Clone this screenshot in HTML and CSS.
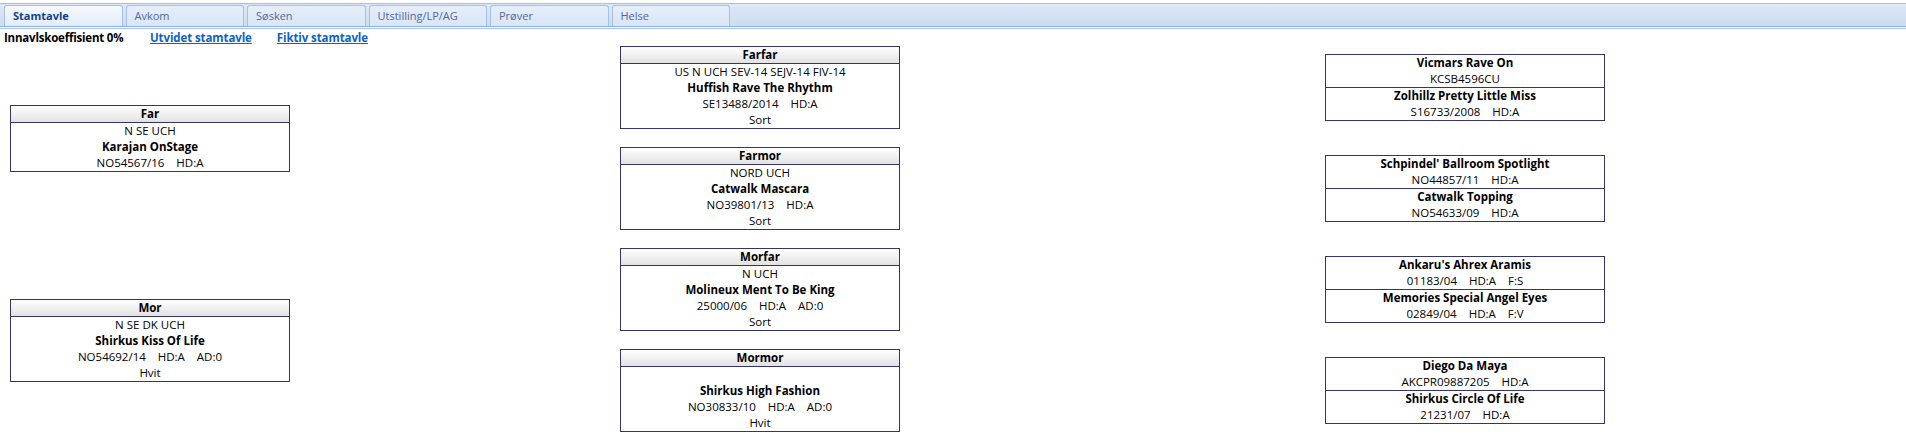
FILE: index.html
```html
<!DOCTYPE html>
<html lang="no">
<head>
<meta charset="utf-8">
<title>Stamtavle</title>
<link rel="stylesheet" href="styles.css">
</head>
<body>
<div class="tabstrip">
  <div class="tabbar">
    <div class="tab active">Stamtavle</div>
    <div class="tab">Avkom</div>
    <div class="tab">Søsken</div>
    <div class="tab">Utstilling/LP/AG</div>
    <div class="tab">Prøver</div>
    <div class="tab">Helse</div>
  </div>
</div>
<div class="infobar">
  <span class="coef">Innavlskoeffisient 0%</span>
  <a class="link" href="#">Utvidet stamtavle</a>
  <a class="link" href="#">Fiktiv stamtavle</a>
</div>
<div class="tree">
  <div class="box far">
    <div class="head">Far</div>
    <div class="line">N SE UCH</div>
    <div class="line name">Karajan OnStage</div>
    <div class="line">NO54567/16    HD:A</div>
  </div>
  <div class="box mor">
    <div class="head">Mor</div>
    <div class="line">N SE DK UCH</div>
    <div class="line name">Shirkus Kiss Of Life</div>
    <div class="line">NO54692/14    HD:A    AD:0</div>
    <div class="line">Hvit</div>
  </div>

  <div class="box mid r1">
    <div class="head">Farfar</div>
    <div class="line">US N UCH SEV-14 SEJV-14 FIV-14</div>
    <div class="line name">Huffish Rave The Rhythm</div>
    <div class="line">SE13488/2014    HD:A</div>
    <div class="line">Sort</div>
  </div>
  <div class="box mid r2">
    <div class="head">Farmor</div>
    <div class="line">NORD UCH</div>
    <div class="line name">Catwalk Mascara</div>
    <div class="line">NO39801/13    HD:A</div>
    <div class="line">Sort</div>
  </div>
  <div class="box mid r3">
    <div class="head">Morfar</div>
    <div class="line">N UCH</div>
    <div class="line name">Molineux Ment To Be King</div>
    <div class="line">25000/06    HD:A    AD:0</div>
    <div class="line">Sort</div>
  </div>
  <div class="box mid r4">
    <div class="head">Mormor</div>
    <div class="line"></div>
    <div class="line name">Shirkus High Fashion</div>
    <div class="line">NO30833/10    HD:A    AD:0</div>
    <div class="line">Hvit</div>
  </div>

  <div class="box pair r1">
    <div class="sec">
      <div class="line name">Vicmars Rave On</div>
      <div class="line">KCSB4596CU</div>
    </div>
    <div class="sec">
      <div class="line name">Zolhillz Pretty Little Miss</div>
      <div class="line">S16733/2008    HD:A</div>
    </div>
  </div>
  <div class="box pair r2">
    <div class="sec">
      <div class="line name">Schpindel' Ballroom Spotlight</div>
      <div class="line">NO44857/11    HD:A</div>
    </div>
    <div class="sec">
      <div class="line name">Catwalk Topping</div>
      <div class="line">NO54633/09    HD:A</div>
    </div>
  </div>
  <div class="box pair r3">
    <div class="sec">
      <div class="line name">Ankaru's Ahrex Aramis</div>
      <div class="line">01183/04    HD:A    F:S</div>
    </div>
    <div class="sec">
      <div class="line name">Memories Special Angel Eyes</div>
      <div class="line">02849/04    HD:A    F:V</div>
    </div>
  </div>
  <div class="box pair r4">
    <div class="sec">
      <div class="line name">Diego Da Maya</div>
      <div class="line">AKCPR09887205    HD:A</div>
    </div>
    <div class="sec">
      <div class="line name">Shirkus Circle Of Life</div>
      <div class="line">21231/07    HD:A</div>
    </div>
  </div>
</div>
</body>
</html>
```
FILE: styles.css
```css
html, body {
  margin: 0;
  padding: 0;
  background: #ffffff;
}
body {
  font-family: "Open Sans", "Noto Sans", sans-serif;
  font-size: 11.5px;
  color: #000;
}
.tabstrip {
  margin-top: 3px;
  padding-bottom: 1px;
  border-bottom: 1px solid #a9c3e8;
}
.tabbar {
  display: flex;
  gap: 3px;
  height: 21px;
  padding: 1px 0 0 4px;
  border-top: 1px solid #a3bfe6;
  border-bottom: 1px solid #8fb1e1;
  background: linear-gradient(#dde8f7, #cddcf1);
}
.tab {
  width: 118.5px;
  box-sizing: border-box;
  height: 21px;
  line-height: 20px;
  padding-left: 8px;
  border: 1px solid #a7c0e5;
  border-bottom: none;
  border-radius: 3px 3px 0 0;
  background: linear-gradient(#e6eefa, #d9e5f6);
  color: #52689a;
  font-size: 11px;
}
.tab.active {
  background: linear-gradient(#f6f9fe, #e2ecf9);
  color: #15428b;
  font-weight: bold;
}
.infobar {
  height: 17px;
  line-height: 17px;
  padding-left: 4px;
  display: flex;
  font-size: 11.5px;
}
.coef {
  width: 146px;
  color: #000;
  font-weight: bold;
  letter-spacing: -0.2px;
}
.link {
  color: #0b63c9;
  font-weight: bold;
  text-decoration: underline;
  margin-right: 25px;
  letter-spacing: -0.1px;
}
.tree {
  display: grid;
  grid-template-columns: 280px 330px 280px 425px 280px;
  grid-template-rows: repeat(4, 83px);
  row-gap: 18px;
  margin-left: 10px;
}
.box {
  box-sizing: border-box;
  border: 1px solid #33336e;
  background: #fff;
  text-align: center;
}
.head {
  height: 17px;
  box-sizing: border-box;
  line-height: 16px;
  border-bottom: 1px solid #33336e;
  background: linear-gradient(#ffffff, #e2e2e2);
  font-weight: bold;
}
.line {
  height: 16px;
  line-height: 16px;
  white-space: pre;
}
.name {
  font-weight: bold;
}
.far { grid-column: 1; grid-row: 1 / 3; align-self: center; }
.mor { grid-column: 1; grid-row: 3 / 5; align-self: center; }
.mid { grid-column: 3; }
.pair { grid-column: 5; align-self: center; }
.r1 { grid-row: 1; }
.r2 { grid-row: 2; }
.r3 { grid-row: 3; }
.r4 { grid-row: 4; }
.sec + .sec {
  border-top: 1px solid #33336e;
}
```
